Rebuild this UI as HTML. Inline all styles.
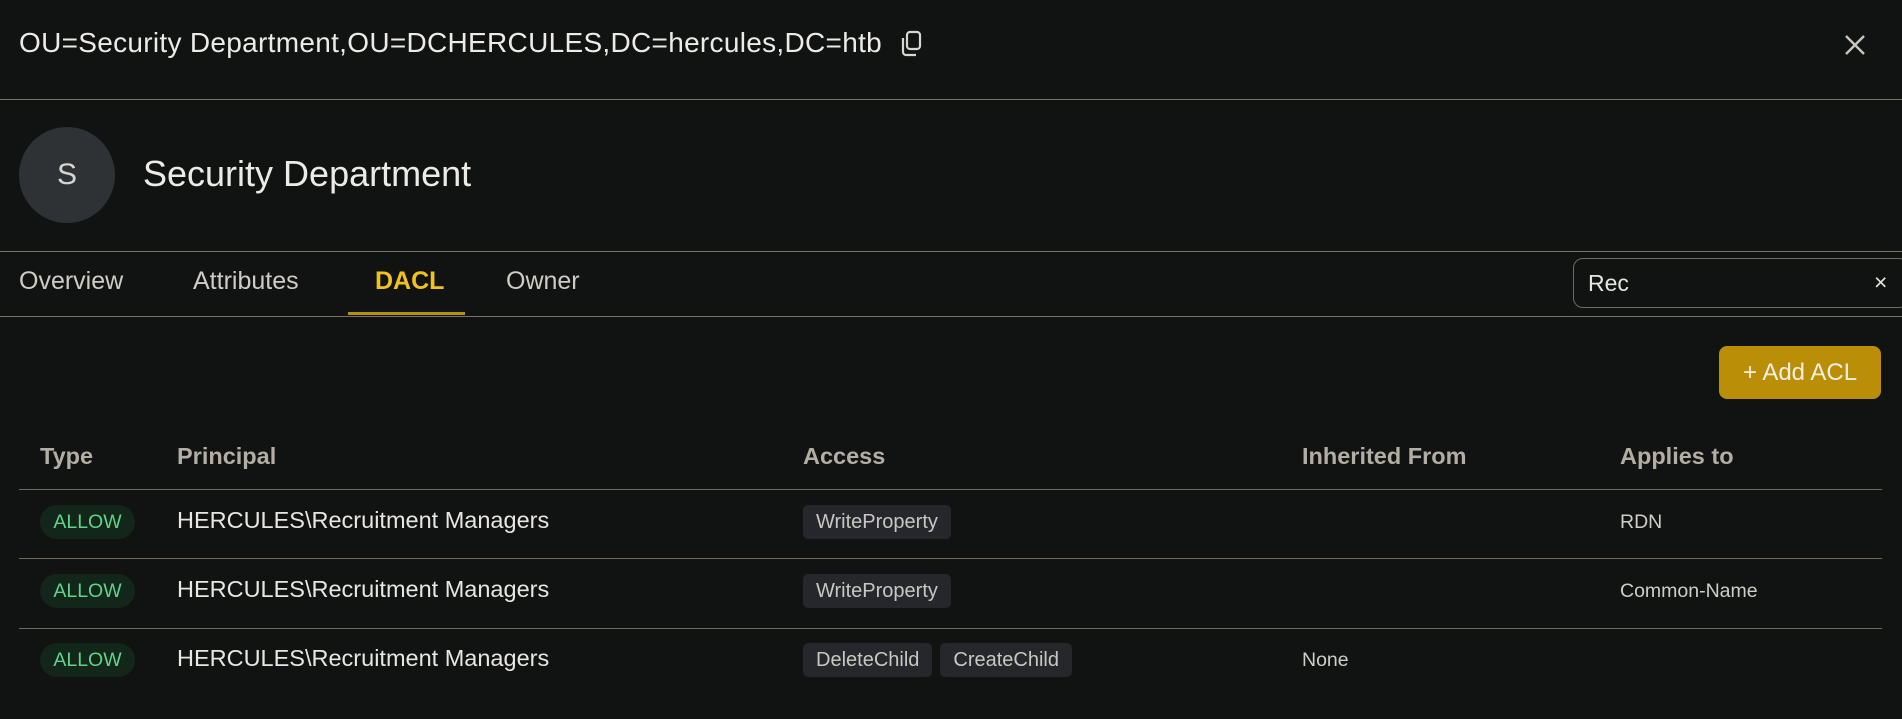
<!DOCTYPE html>
<html><head><meta charset="utf-8"><style>
*{margin:0;padding:0;box-sizing:border-box}
body{width:1902px;height:719px;background:#111312;font-family:"Liberation Sans",sans-serif;color:#e6e4e0;position:relative;overflow:hidden}
.a{position:absolute;white-space:nowrap}
.hl{position:absolute;left:0;width:1902px;height:1px;background:#7a756b}
.th{font-weight:bold;font-size:23.5px;color:#b3ada3;top:443px}
.rl{position:absolute;left:19px;width:1863px;height:1px;background:#6e685d}
.pill{position:absolute;left:40px;width:95px;height:34px;border-radius:17px;background:#13261a;color:#5fd48a;font-size:19.5px;line-height:34px;text-align:center}
.pr{font-size:23.5px;color:#e8e6e2;left:177px}
.chips{position:absolute;left:803px;display:flex;gap:8px}
.chip{height:34px;border-radius:5px;background:#25272a;color:#c9c7c2;font-size:20px;line-height:34px;padding:0 13px;white-space:nowrap}
.sm{font-size:19.5px;color:#cfcdc8}
.tab{font-size:25px;color:#cfccc6;top:267px}
</style></head><body>
<div class="a" style="left:19px;top:27px;font-size:28px;letter-spacing:0.3px;color:#ecebe8">OU=Security Department,OU=DCHERCULES,DC=hercules,DC=htb</div>
<svg class="a" style="left:898px;top:30px" width="26" height="28" viewBox="0 0 26 28" fill="none" stroke="#d8d6d2" stroke-width="2.2"><rect x="9" y="2" width="13" height="17" rx="3"/><path d="M5 8v14a3 3 0 0 0 3 3h10"/></svg>
<svg class="a" style="left:1844px;top:34px" width="22" height="22" viewBox="0 0 22 22" stroke="#c9c6c0" stroke-width="2.4"><path d="M2 2L20 20M20 2L2 20"/></svg>
<div class="hl" style="top:99px"></div>
<div class="a" style="left:19px;top:127px;width:96px;height:96px;border-radius:50%;background:#2f3235;color:#d6d4cf;font-size:30px;line-height:96px;text-align:center">S</div>
<div class="a" style="left:143px;top:153px;font-size:36px;color:#ecebe8">Security Department</div>
<div class="hl" style="top:251px"></div>
<div class="a tab" style="left:19px">Overview</div>
<div class="a tab" style="left:193px">Attributes</div>
<div class="a tab" style="left:375px;color:#f2c21b;font-weight:bold">DACL</div>
<div class="a tab" style="left:506px">Owner</div>
<div class="a" style="left:348px;top:312px;width:117px;height:3px;background:#b8900b"></div>
<div class="hl" style="top:316px"></div>
<div class="a" style="left:1573px;top:258px;width:336px;height:50px;border:1px solid #6f6b62;border-radius:10px"></div>
<div class="a" style="left:1588px;top:270px;font-size:23px;color:#e6e4e0">Rec</div>
<div class="a" style="left:1874px;top:269px;font-size:23px;color:#e6e4e0">×</div>
<div class="a" style="left:1719px;top:346px;width:162px;height:53px;border-radius:8px;background:#bb8e07;color:#f3eee2;font-size:24px;line-height:53px;text-align:center">+ Add ACL</div>
<div class="a th" style="left:40px">Type</div>
<div class="a th" style="left:177px">Principal</div>
<div class="a th" style="left:803px">Access</div>
<div class="a th" style="left:1302px">Inherited From</div>
<div class="a th" style="left:1620px">Applies to</div>
<div class="rl" style="top:489px"></div>
<div class="rl" style="top:558px"></div>
<div class="rl" style="top:628px"></div>
<div class="pill" style="top:505px">ALLOW</div>
<div class="a pr" style="top:507px">HERCULES\Recruitment Managers</div>
<div class="chips" style="top:505px"><div class="chip">WriteProperty</div></div>
<div class="a sm" style="left:1620px;top:511px">RDN</div>
<div class="pill" style="top:574px">ALLOW</div>
<div class="a pr" style="top:576px">HERCULES\Recruitment Managers</div>
<div class="chips" style="top:574px"><div class="chip">WriteProperty</div></div>
<div class="a sm" style="left:1620px;top:580px">Common-Name</div>
<div class="pill" style="top:643px">ALLOW</div>
<div class="a pr" style="top:645px">HERCULES\Recruitment Managers</div>
<div class="chips" style="top:643px"><div class="chip">DeleteChild</div><div class="chip">CreateChild</div></div>
<div class="a sm" style="left:1302px;top:649px">None</div>
</body></html>
